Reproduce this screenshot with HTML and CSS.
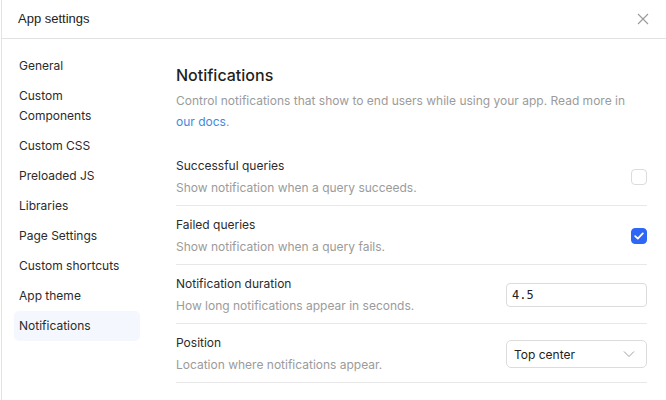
FILE: index.html
```html
<!DOCTYPE html>
<html>
<head>
<meta charset="utf-8">
<link rel="stylesheet" href="styles.css">
</head>
<body>
<div class="dialog">
  <div class="header">
    <span class="title">App settings</span>
    <svg class="close" width="12" height="12" viewBox="0 0 12 12"><path d="M1 1L11 11M11 1L1 11" stroke="#9a9a9a" stroke-width="1.1" fill="none"/></svg>
  </div>
  <div class="body">
    <nav class="sidebar">
      <div class="nav-item">General</div>
      <div class="nav-item">Custom<br>Components</div>
      <div class="nav-item">Custom CSS</div>
      <div class="nav-item">Preloaded JS</div>
      <div class="nav-item">Libraries</div>
      <div class="nav-item">Page Settings</div>
      <div class="nav-item">Custom shortcuts</div>
      <div class="nav-item">App theme</div>
      <div class="nav-item active">Notifications</div>
    </nav>
    <main class="content">
      <h1 class="heading">Notifications</h1>
      <p class="intro">Control notifications that show to end users while using your app. Read more in <a class="link">our docs</a>.</p>
      <div class="rows">
        <div class="row">
          <div class="text">
            <div class="label">Successful queries</div>
            <div class="desc">Show notification when a query succeeds.</div>
          </div>
          <span class="checkbox"></span>
        </div>
        <div class="row">
          <div class="text">
            <div class="label">Failed queries</div>
            <div class="desc">Show notification when a query fails.</div>
          </div>
          <span class="checkbox checked"><svg width="10" height="8" viewBox="0 0 10 8"><path d="M1.2 4.2L3.8 6.6L8.8 1.4" stroke="#fff" stroke-width="1.8" fill="none" stroke-linecap="round" stroke-linejoin="round"/></svg></span>
        </div>
        <div class="row">
          <div class="text">
            <div class="label">Notification duration</div>
            <div class="desc">How long notifications appear in seconds.</div>
          </div>
          <div class="input">4.5</div>
        </div>
        <div class="row">
          <div class="text">
            <div class="label">Position</div>
            <div class="desc">Location where notifications appear.</div>
          </div>
          <div class="select"><span>Top center</span><svg width="12" height="8" viewBox="0 0 12 8"><path d="M1 1.5L6 6.5L11 1.5" stroke="#a0a0a0" stroke-width="1" fill="none"/></svg></div>
        </div>
      </div>
    </main>
  </div>
</div>
</body>
</html>
```

FILE: styles.css
```css
* { box-sizing: border-box; }
html, body { margin: 0; padding: 0; background: #fff; }
body { font-family: Inter, "Noto Sans", sans-serif; color: #2b2b2b; }
.dialog {
  margin-left: 1px;
  height: 400px;
  border-left: 1px solid #e2e2e2;
  display: flex;
  flex-direction: column;
}
.header {
  height: 39px;
  border-bottom: 1px solid #e2e2e2;
  display: flex;
  align-items: center;
  justify-content: space-between;
  padding: 0 17px 0 16px;
}
.title {
  font-family: "Liberation Sans", Arial, sans-serif;
  font-size: 13px;
  color: #222;
  margin-top: -2px;
}
.close { margin-top: -1px; }
.body { display: flex; flex: 1; }
.sidebar {
  width: 148px;
  padding: 12px 10px 0 12px;
  display: flex;
  flex-direction: column;
}
.nav-item {
  font-size: 12px;
  line-height: 20px;
  padding: 5px 5px;
  color: #2b2b2b;
  border-radius: 5px;
}
.nav-item.active { background: #f4f7fe; }
.content {
  flex: 1;
  padding: 24px 19px 0 26px;
}
.heading {
  margin: 0;
  font-size: 16px;
  line-height: 24px;
  font-weight: 500;
  color: #1f1f1f;
}
.intro {
  margin: 3px 0 15px;
  font-size: 12px;
  line-height: 21px;
  color: #9b9b9b;
}
.link { color: #3d8be0; }
.row {
  display: flex;
  align-items: center;
  justify-content: space-between;
  padding: 9px 0 7px;
  border-bottom: 1px solid #e8e8e8;
}
.label { font-size: 12px; line-height: 20px; color: #2b2b2b; }
.desc { font-size: 12px; line-height: 20px; margin-top: 2px; color: #9b9b9b; }
.checkbox {
  width: 16px;
  height: 16px;
  border: 1px solid #dcdcdc;
  border-radius: 4px;
  display: flex;
  align-items: center;
  justify-content: center;
}
.checkbox.checked { background: #2e66f6; border-color: #2e66f6; }
.input {
  width: 141px;
  height: 24px;
  border: 1px solid #dcdcdc;
  border-radius: 4px;
  font-family: "DejaVu Sans Mono", "Liberation Mono", monospace;
  font-size: 12px;
  line-height: 22px;
  padding-left: 5px;
  color: #222;
}
.select {
  width: 141px;
  height: 28px;
  border: 1px solid #dcdcdc;
  border-radius: 5px;
  display: flex;
  align-items: center;
  justify-content: space-between;
  padding: 0 11px 0 7px;
  font-size: 12px;
  color: #222;
}
```
